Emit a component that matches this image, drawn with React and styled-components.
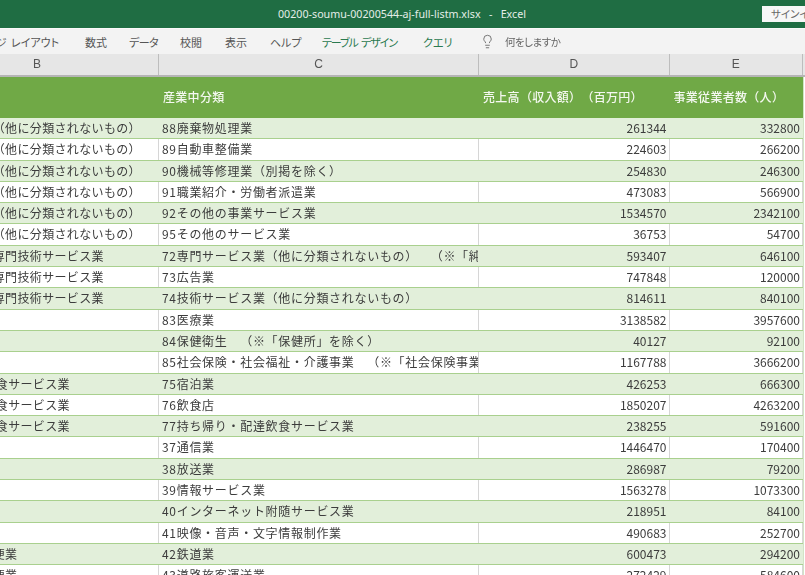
import React from "react";
import styled, { createGlobalStyle } from "styled-components";
import { Lightbulb } from "lucide-react";

const GlobalStyle = createGlobalStyle`
  html, body {
    margin: 0;
    padding: 0;
    background: #fff;
  }
  body {
    width: 805px;
    height: 575px;
    overflow: hidden;
    font-family: "Noto Sans CJK JP", "Noto Sans", sans-serif;
    text-spacing-trim: space-all;
  }
`;

const COLUMNS = "243px 320px 190.5px 133.5px";

const Window = styled.div`
  width: 805px;
  height: 575px;
  overflow: hidden;
  display: flex;
  flex-direction: column;
  filter: blur(0.3px);
`;

const TitleBar = styled.div`
  height: 28px;
  flex: none;
  background: #1f6d43;
  color: #e4eee8;
  display: flex;
  align-items: center;
  position: relative;
  font: 10.7px "Noto Sans", sans-serif;
  white-space: pre;
`;

const FileName = styled.div`
  margin-left: 278px;
`;

const SignIn = styled.div`
  position: absolute;
  left: 762px;
  top: 6px;
  width: 70px;
  height: 16px;
  background: #f7f7f7;
  color: #666;
  font: 10.5px/16px "Noto Sans CJK JP", sans-serif;
  font-feature-settings: "palt";
  padding-left: 9px;
`;

const Ribbon = styled.div`
  height: 26px;
  flex: none;
  background: #f3f3f3;
  border-top: 1px solid #fafafa;
  box-sizing: border-box;
  display: flex;
  align-items: center;
  font-size: 11px;
  font-feature-settings: "palt";
  color: #555;
  white-space: nowrap;
`;

const Tab = styled.div`
  width: ${(props) => props.$width}px;
  margin-left: ${(props) => props.$offset || 0}px;
  flex: none;
  color: ${(props) => (props.$accent ? "#2b7a50" : "#555")};
  text-align: ${(props) => props.$align || "left"};
  letter-spacing: ${(props) => props.$tight || 0}px;
  word-spacing: 2px;
`;

const Hint = styled.div`
  margin-left: 10px;
  color: #666;
  font-size: 10.5px;
  letter-spacing: -0.5px;
`;

const Bulb = styled(Lightbulb)`
  color: #666;
  margin-left: 1px;
  flex: none;
`;

const ColumnHead = styled.div`
  height: 23px;
  flex: none;
  box-sizing: border-box;
  margin-left: -84px;
  display: grid;
  grid-template-columns: ${COLUMNS};
  background: #e6e6e6;
  border-bottom: 2px solid #b5b5b5;
`;

const ColumnLabel = styled.div`
  border-right: 1px solid #bdbdbd;
  text-align: center;
  color: #555;
  font: 12px/21px "Liberation Sans", sans-serif;
`;

const Sheet = styled.div`
  margin-left: -84px;
  width: 888px;
  box-sizing: border-box;
  border-right: 1px solid #d3e3c6;
  display: flex;
  flex-direction: column;
`;

const HeadRow = styled.div`
  height: 41px;
  flex: none;
  box-sizing: border-box;
  padding-bottom: 3px;
  display: grid;
  grid-template-columns: ${COLUMNS};
  background: #70a946;
  color: #f4f8f0;
  font-size: 12px;
  font-weight: 500;
  letter-spacing: 0.3px;
  align-items: center;
  white-space: nowrap;
`;

const HeadCell = styled.div`
  padding-left: 4px;
  overflow: hidden;
`;

const Row = styled.div`
  height: 21.3px;
  flex: none;
  box-sizing: border-box;
  display: grid;
  grid-template-columns: ${COLUMNS};
  background: ${(props) => (props.$odd ? "#e2efda" : "#fff")};
  border-bottom: 1px solid #a9d08e;
  color: #3c3c3c;
  font-size: 12px;
  line-height: 20px;
  white-space: nowrap;
`;

const Cell = styled.div`
  overflow: hidden;
  box-sizing: border-box;
  text-align: ${(props) => (props.$num ? "right" : "left")};
  padding: ${(props) => (props.$num ? "0 2px 0 0" : "0 0 0 3px")};
  border-right: 1px solid ${(props) => (props.$odd ? "transparent" : "#d6d6d6")};
`;

const NameCell = styled(Cell)`
  padding-left: 15px;
  letter-spacing: 0.35px;
`;

const IndustryCell = styled(Cell)`
  letter-spacing: 0.7px;
`;

const OTHER = "サービス業（他に分類されないもの）";
const PRO = "学術研究，専門技術サービス業";
const MED = "医療，福祉";
const FOOD = "宿泊業， 飲食サービス業";
const INFO = "情報通信業";
const LOG = "運輸業，郵便業";

const rows = [
  [OTHER, "88廃棄物処理業", 261344, 332800],
  [OTHER, "89自動車整備業", 224603, 266200],
  [OTHER, "90機械等修理業（別掲を除く）", 254830, 246300],
  [OTHER, "91職業紹介・労働者派遣業", 473083, 566900],
  [OTHER, "92その他の事業サービス業", 1534570, 2342100],
  [OTHER, "95その他のサービス業", 36753, 54700],
  [PRO, "72専門サービス業（他に分類されないもの）　（※「純粋持株会社」を除く）", 593407, 646100],
  [PRO, "73広告業", 747848, 120000],
  [PRO, "74技術サービス業（他に分類されないもの）", 814611, 840100],
  [MED, "83医療業", 3138582, 3957600],
  [MED, "84保健衛生　（※「保健所」を除く）", 40127, 92100],
  [MED, "85社会保険・社会福祉・介護事業　（※「社会保険事業団体」を除く）", 1167788, 3666200],
  [FOOD, "75宿泊業", 426253, 666300],
  [FOOD, "76飲食店", 1850207, 4263200],
  [FOOD, "77持ち帰り・配達飲食サービス業", 238255, 591600],
  [INFO, "37通信業", 1446470, 170400],
  [INFO, "38放送業", 286987, 79200],
  [INFO, "39情報サービス業", 1563278, 1073300],
  [INFO, "40インターネット附随サービス業", 218951, 84100],
  [INFO, "41映像・音声・文字情報制作業", 490683, 252700],
  [LOG, "42鉄道業", 600473, 294200],
  [LOG, "43道路旅客運送業", 272429, 584600],
];

const App = () => {
  return (
    <Window>
      <GlobalStyle />
      <TitleBar>
        <FileName>00200-soumu-00200544-aj-full-listm.xlsx   -   Excel</FileName>
        <SignIn>サインイン</SignIn>
      </TitleBar>
      <Ribbon>
        <Tab $width={85} $align="right" $offset={-26}>ページ レイアウト</Tab>
        <Tab $width={44} $offset={26}>数式</Tab>
        <Tab $width={51} $tight={-0.5}>データ</Tab>
        <Tab $width={45}>校閲</Tab>
        <Tab $width={45}>表示</Tab>
        <Tab $width={52}>ヘルプ</Tab>
        <Tab $width={101} $accent $tight={-1.1}>テーブル デザイン</Tab>
        <Tab $width={56} $accent>クエリ</Tab>
        <Bulb size={15} strokeWidth={1.4} />
        <Hint>何をしますか</Hint>
      </Ribbon>
      <ColumnHead>
        <ColumnLabel>B</ColumnLabel>
        <ColumnLabel>C</ColumnLabel>
        <ColumnLabel>D</ColumnLabel>
        <ColumnLabel>E</ColumnLabel>
      </ColumnHead>
      <Sheet>
        <HeadRow>
          <HeadCell />
          <HeadCell>産業中分類</HeadCell>
          <HeadCell>売上高（収入額）（百万円）</HeadCell>
          <HeadCell>事業従業者数（人）</HeadCell>
        </HeadRow>
        {rows.map((row, i) => {
          const odd = i % 2 === 0;
          return (
            <Row key={row[1]} $odd={odd}>
              <NameCell $odd={odd}>{row[0]}</NameCell>
              <IndustryCell $odd={odd}>{row[1]}</IndustryCell>
              <Cell $num $odd={odd}>{row[2]}</Cell>
              <Cell $num $odd={odd}>{row[3]}</Cell>
            </Row>
          );
        })}
      </Sheet>
    </Window>
  );
};

export default App;
